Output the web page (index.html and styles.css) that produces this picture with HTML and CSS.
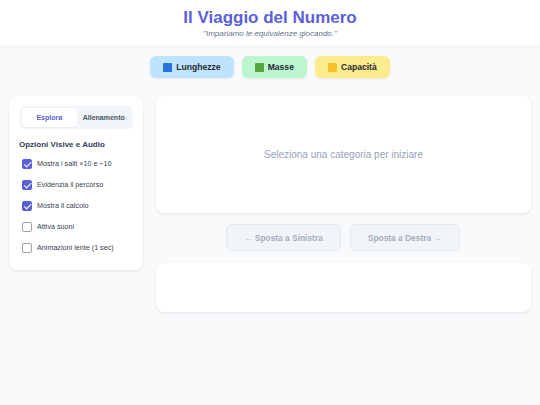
FILE: index.html
```html
<!DOCTYPE html>
<html lang="it">
<head>
<meta charset="utf-8">
<title>Il Viaggio del Numero</title>
<link rel="stylesheet" href="styles.css">
</head>
<body>
<header class="header">
  <h1 class="title">Il Viaggio del Numero</h1>
  <p class="subtitle">"Impariamo le equivalenze giocando."</p>
</header>
<nav class="cats">
  <button class="cat cat-blue"><span class="sq sq-blue"></span>Lunghezze</button>
  <button class="cat cat-green"><span class="sq sq-green"></span>Masse</button>
  <button class="cat cat-yellow"><span class="sq sq-yellow"></span>Capacità</button>
</nav>
<main class="layout">
  <aside class="side card">
    <div class="tabs">
      <div class="tab active">Esplora</div>
      <div class="tab">Allenamento</div>
    </div>
    <h2 class="opt-title">Opzioni Visive e Audio</h2>
    <ul class="opts">
      <li class="opt"><span class="cb on"></span>Mostra i salti ×10 e ÷10</li>
      <li class="opt"><span class="cb on"></span>Evidenzia il percorso</li>
      <li class="opt"><span class="cb on"></span>Mostra il calcolo</li>
      <li class="opt"><span class="cb"></span>Attiva suoni</li>
      <li class="opt"><span class="cb"></span>Animazioni lente (1 sec)</li>
    </ul>
  </aside>
  <section class="content">
    <div class="card stage">Seleziona una categoria per iniziare</div>
    <div class="moves">
      <button class="move">← Sposta a Sinistra</button>
      <button class="move">Sposta a Destra →</button>
    </div>
    <div class="card result"></div>
  </section>
</main>
</body>
</html>
```
FILE: styles.css
```css
* { box-sizing: border-box; }
html, body { margin: 0; padding: 0; }
body {
  background: #f8fafc;
  font-family: "Liberation Sans", Arial, sans-serif;
  color: #334155;
  width: 540px;
  height: 405px;
  overflow: hidden;
}
.header {
  background: #ffffff;
  height: 47px;
  border-bottom: 1px solid #eef0f4;
  box-shadow: 0 1px 2px rgba(0,0,0,0.03);
  text-align: center;
  padding-top: 8px;
}
.title {
  margin: 0;
  font-size: 17px;
  line-height: 20px;
  font-weight: bold;
  color: #5b5fd9;
}
.subtitle {
  margin: 1px 0 0;
  font-size: 8px;
  font-style: italic;
  color: #64748b;
}
.cats {
  display: flex;
  justify-content: center;
  gap: 8px;
  margin-top: 9px;
}
.cat {
  border: none;
  border-radius: 6px;
  height: 22px;
  padding: 0 13px;
  font-family: inherit;
  font-size: 8.6px;
  font-weight: bold;
  color: #1f2937;
  display: flex;
  align-items: center;
  gap: 4px;
  box-shadow: 0 1px 2px rgba(0,0,0,0.08);
}
.cat-blue { background: #bfe3fd; }
.cat-green { background: #bdf5cf; }
.cat-yellow { background: #fdec8c; }
.sq { width: 9px; height: 9px; border-radius: 1px; display: inline-block; }
.sq-blue { background: #2673d9; }
.sq-green { background: #57a83c; }
.sq-yellow { background: #f8c22a; }
.layout {
  display: flex;
  gap: 13px;
  padding: 18px 9px 0 9px;
  align-items: flex-start;
}
.card {
  background: #ffffff;
  border-radius: 8px;
  box-shadow: 0 1px 3px rgba(15,23,42,0.10);
}
.side {
  width: 134px;
  flex: none;
  padding: 10px 10px 12px 11px;
}
.tabs {
  display: flex;
  background: #f1f5f9;
  border-radius: 5px;
  padding: 2px;
  height: 23px;
}
.tab {
  flex: 1;
  display: flex;
  align-items: center;
  justify-content: center;
  font-size: 7px;
  font-weight: bold;
  color: #4b5563;
  border-radius: 4px;
}
.tab.active {
  background: #ffffff;
  color: #5b5fd9;
  box-shadow: 0 1px 1px rgba(0,0,0,0.04);
}
.opt-title {
  margin: 11px 0 0 -1px;
  font-size: 8px;
  font-weight: bold;
  color: #334155;
}
.opts {
  list-style: none;
  margin: 4px 0 0;
  padding: 0;
}
.opt {
  display: flex;
  align-items: center;
  gap: 5px;
  height: 21px;
  font-size: 7.2px;
  color: #374151;
  padding-left: 2px;
}
.cb {
  width: 10px;
  height: 10px;
  border: 1px solid #9ca3af;
  border-radius: 2px;
  background: #fff;
  position: relative;
  flex: none;
}
.cb.on {
  background: #5b5fd9;
  border-color: #5b5fd9;
}
.cb.on::after {
  content: "";
  position: absolute;
  left: 3px;
  top: 0.5px;
  width: 2.5px;
  height: 5.5px;
  border: solid #fff;
  border-width: 0 1.5px 1.5px 0;
  transform: rotate(45deg);
}
.content {
  flex: 1;
  display: flex;
  flex-direction: column;
}
.stage {
  height: 117px;
  display: flex;
  align-items: center;
  justify-content: center;
  font-size: 10px;
  color: #94a3b8;
}
.moves {
  display: flex;
  justify-content: center;
  gap: 9px;
  margin-top: 11px;
  padding-right: 1px;
}
.move {
  height: 27px;
  padding: 0 17px;
  background: #f1f5f9;
  border: 1px solid #e2e8f0;
  border-radius: 6px;
  font-family: inherit;
  font-size: 8.4px;
  font-weight: bold;
  color: #a3acb9;
}
.result {
  margin-top: 12px;
  height: 49px;
}
```
